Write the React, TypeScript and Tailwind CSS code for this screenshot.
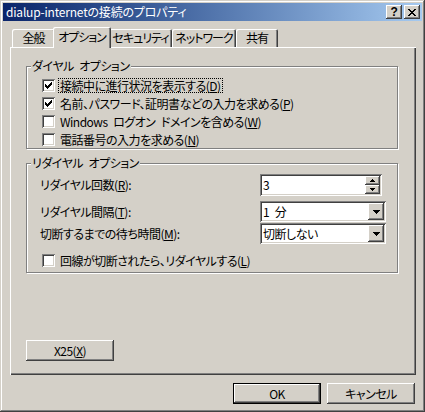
import React from 'react';

const raised =
  'shadow-[inset_-1px_-1px_#404040,inset_1px_1px_#ffffff,inset_-2px_-2px_#808080,inset_2px_2px_#d4d0c8]';
const sunken =
  'shadow-[inset_1px_1px_#808080,inset_-1px_-1px_#ffffff,inset_2px_2px_#404040,inset_-2px_-2px_#d4d0c8]';

function Mn({ c }: { c: string }) {
  return <span className="underline decoration-1 underline-offset-[1px]">{c}</span>;
}

function Check({ checked }: { checked?: boolean }) {
  return (
    <span className={`block w-[13px] h-[13px] shrink-0 bg-white ${sunken}`}>
      {checked && (
        <svg width="13" height="13" viewBox="0 0 13 13" shapeRendering="crispEdges">
          <path
            d="M3 5h1v3h-1z M4 6h1v3h-1z M5 7h1v3h-1z M6 6h1v3h-1z M7 5h1v3h-1z M8 4h1v3h-1z M9 3h1v3h-1z"
            fill="#000"
          />
        </svg>
      )}
    </span>
  );
}

function CheckRow({
  checked,
  focused,
  children,
}: {
  checked?: boolean;
  focused?: boolean;
  children: React.ReactNode;
}) {
  return (
    <div className="flex items-center h-[18px] gap-[3px]">
      <Check checked={checked} />
      <span
        className={`h-[15px] px-[1px] leading-[13px] whitespace-nowrap border ${
          focused ? 'border-dotted border-black' : 'border-transparent'
        }`}
      >
        {children}
      </span>
    </div>
  );
}

function Group({
  title,
  className,
  children,
}: {
  title: string;
  className: string;
  children: React.ReactNode;
}) {
  return (
    <div className={`relative border border-[#808080] shadow-[inset_1px_1px_#ffffff,1px_1px_#ffffff] ${className}`}>
      <span className="absolute left-[4px] top-[-8px] bg-[#d4d0c8] px-[1px] leading-[14px] whitespace-nowrap">
        {title}
      </span>
      {children}
    </div>
  );
}

function Tab({ label, className, active }: { label: string; className: string; active?: boolean }) {
  return (
    <div
      className={`flex justify-center items-center bg-[#d4d0c8] rounded-t-[2px] shadow-[inset_1px_1px_#ffffff,inset_-1px_0_#404040,inset_-2px_0_#808080] ${
        active ? 'h-[21px] -mb-px -mx-[2px] relative z-10 pb-[2px]' : 'h-[18px]'
      } ${className}`}
    >
      <span className="leading-[14px] whitespace-nowrap tracking-[-1px]">{label}</span>
    </div>
  );
}

function DownArrow() {
  return (
    <svg width="7" height="4" viewBox="0 0 7 4" shapeRendering="crispEdges">
      <path d="M0 0h7v1h-1v1h-1v1h-1v1h-1v-1h-1v-1h-1v-1h-1z" fill="#000" />
    </svg>
  );
}

function Combo({ value }: { value: string }) {
  return (
    <div className={`w-[126px] h-[21px] bg-white ${sunken} flex items-center p-[2px]`}>
      <span className="flex-1 pl-[1px] leading-[14px] whitespace-nowrap">{value}</span>
      <span className={`w-[16px] h-[17px] bg-[#d4d0c8] ${raised} flex items-center justify-center`}>
        <DownArrow />
      </span>
    </div>
  );
}

function Spin({ value }: { value: string }) {
  return (
    <div className={`w-[122px] h-[22px] bg-white ${sunken} flex p-[2px]`}>
      <span className="flex-1 pl-[1px] leading-[18px]">{value}</span>
      <div className="flex flex-col w-[15px]">
        <span className={`h-[9px] bg-[#d4d0c8] ${raised} flex items-center justify-center`}>
          <svg width="5" height="3" viewBox="0 0 5 3" shapeRendering="crispEdges">
            <path d="M2 0h1v1h1v1h1v1h-5v-1h1v-1h1z" fill="#000" />
          </svg>
        </span>
        <span className={`h-[9px] bg-[#d4d0c8] ${raised} flex items-center justify-center`}>
          <svg width="5" height="3" viewBox="0 0 5 3" shapeRendering="crispEdges">
            <path d="M0 0h5v1h-1v1h-1v1h-1v-1h-1v-1h-1z" fill="#000" />
          </svg>
        </span>
      </div>
    </div>
  );
}

function PushButton({ children, isDefault, className }: { children: React.ReactNode; isDefault?: boolean; className?: string }) {
  return (
    <div
      className={`w-[88px] h-[21px] flex items-center justify-center bg-[#d4d0c8] ${
        isDefault
          ? 'shadow-[inset_0_0_0_1px_#000000,inset_-2px_-2px_#404040,inset_2px_2px_#ffffff,inset_-3px_-3px_#808080]'
          : raised
      } ${className ?? ''}`}
    >
      <span className="leading-[14px] whitespace-nowrap">{children}</span>
    </div>
  );
}

export default function App() {
  return (
    <div
      className={`w-[425px] h-[412px] p-[3px] bg-[#d4d0c8] text-black text-[12px] tracking-[-0.5px] font-['Noto_Sans_CJK_JP',sans-serif] [font-feature-settings:'palt'] shadow-[inset_-1px_-1px_#404040,inset_1px_1px_#d4d0c8,inset_-2px_-2px_#808080,inset_2px_2px_#ffffff]`}
    >
      {/* title bar */}
      <div className="h-[18px] flex items-center justify-between pl-[3px] pr-[2px] bg-gradient-to-r from-[#0a246a] to-[#a6caf0]">
        <span className="text-white leading-[14px] whitespace-nowrap tracking-[-0.2px]">dialup-internetの接続のプロパティ</span>
        <div className="flex gap-[2px]">
          <span className={`w-[16px] h-[14px] bg-[#d4d0c8] ${raised} flex items-center justify-center`}>
            <span className="font-['Liberation_Sans',sans-serif] font-bold text-[12px] leading-[12px] mt-[-1px]">?</span>
          </span>
          <span className={`w-[16px] h-[14px] bg-[#d4d0c8] ${raised} flex items-center justify-center`}>
            <svg width="8" height="7" viewBox="0 0 8 7" shapeRendering="crispEdges">
              <path
                d="M0 0h2v1h1v1h2v-1h1v-1h2v1h-1v1h-1v1h-1v1h1v1h1v1h1v1h-2v-1h-1v-1h-2v1h-1v1h-2v-1h1v-1h1v-1h1v-1h-1v-1h-1v-1h-1z"
                fill="#000"
              />
            </svg>
          </span>
        </div>
      </div>

      {/* tabs */}
      <div className="ml-[7px] mt-[6px] w-[406px]">
        <div className="flex items-end h-[20px] pl-[2px]">
          <Tab label="全般" className="w-[43px]" />
          <Tab label="オプション" className="w-[58px]" active />
          <Tab label="セキュリティ" className="w-[63px]" />
          <Tab label="ネットワーク" className="w-[64px]" />
          <Tab label="共有" className="w-[42px]" />
        </div>

        <div className="h-[328px] flex flex-col pt-[19px] pl-[16px] shadow-[inset_1px_1px_#ffffff,inset_-1px_-1px_#404040,inset_-2px_-2px_#808080]">
          <Group title={'ダイヤル\u2002オプション'} className="w-[372px] h-[83px] pt-[9px] pl-[15px]">
            <CheckRow checked focused>
              接続中に進行状況を表示する(<Mn c="D" />)
            </CheckRow>
            <CheckRow checked>
              名前、パスワード、証明書などの入力を求める(<Mn c="P" />)
            </CheckRow>
            <CheckRow>
              {'Windows\u2002ログオン\u2002ドメインを含める('}
              <Mn c="W" />)
            </CheckRow>
            <CheckRow>
              電話番号の入力を求める(<Mn c="N" />)
            </CheckRow>
          </Group>

          <Group title={'リダイヤル\u2002オプション'} className="mt-[14px] w-[372px] h-[110px] pt-[10px]">
            <div className="flex items-center h-[22px] pl-[13px]">
              <span className="w-[220px] leading-[14px]">
                リダイヤル回数(<Mn c="R" />):
              </span>
              <Spin value="3" />
            </div>
            <div className="flex items-center h-[21px] pl-[13px] mt-[5px]">
              <span className="w-[220px] leading-[14px]">
                リダイヤル間隔(<Mn c="T" />):
              </span>
              <Combo value={'1\u2002分'} />
            </div>
            <div className="flex items-center h-[21px] pl-[13px] mt-[1px]">
              <span className="w-[220px] leading-[14px]">
                切断するまでの待ち時間(<Mn c="M" />):
              </span>
              <Combo value="切断しない" />
            </div>
            <div className="pl-[15px] mt-[7px]">
              <CheckRow>
                回線が切断されたら、リダイヤルする(<Mn c="L" />)
              </CheckRow>
            </div>
          </Group>

          <PushButton className="mt-[67px]">
            X25(<Mn c="X" />)
          </PushButton>
        </div>
      </div>

      {/* dialog buttons */}
      <div className="flex justify-end gap-[6px] pr-[7px] mt-[8px]">
        <PushButton isDefault>OK</PushButton>
        <PushButton>キャンセル</PushButton>
      </div>
    </div>
  );
}
